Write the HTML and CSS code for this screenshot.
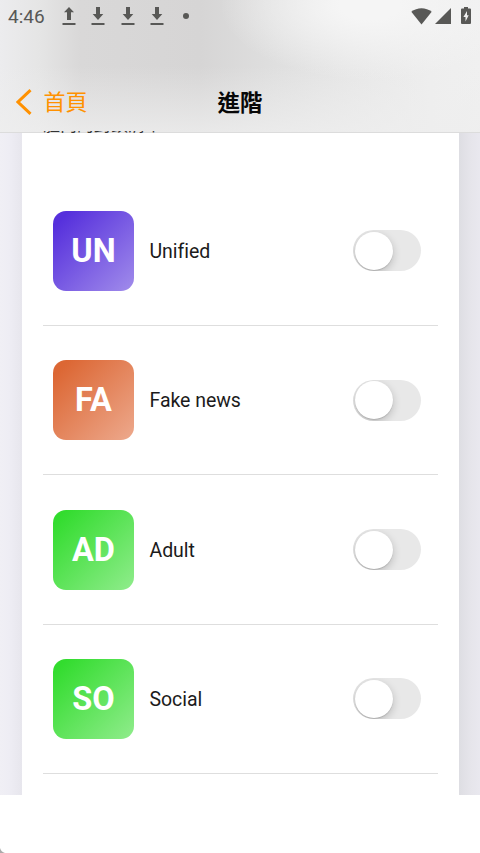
FILE: index.html
```html
<!DOCTYPE html>
<html lang="zh-Hant">
<head>
<meta charset="utf-8">
<title>進階</title>
<link rel="stylesheet" href="styles.css">
</head>
<body>
<div class="app">
  <header class="header">
    <div class="status">
      <span class="time">4:46</span>
      <div class="notices">
        <svg class="transfer" viewBox="0 0 14 19"><path d="M7 0 12 5.3H9V13H5V5.3H2zM.5 16h13v2H.5z"/></svg>
        <svg class="transfer" viewBox="0 0 14 19"><path d="M5 0h4v7h3.3L7 13 1.7 7H5zM.5 16h13v2H.5z"/></svg>
        <svg class="transfer" viewBox="0 0 14 19"><path d="M5 0h4v7h3.3L7 13 1.7 7H5zM.5 16h13v2H.5z"/></svg>
        <svg class="transfer" viewBox="0 0 14 19"><path d="M5 0h4v7h3.3L7 13 1.7 7H5zM.5 16h13v2H.5z"/></svg>
      </div>
      <span class="dot"></span>
      <svg class="wifi" viewBox="0 0 21 17"><path d="M10.5 16.5.3 3.8C6-1 15-1 20.7 3.8z"/></svg>
      <svg class="signal" viewBox="0 0 16 16"><path d="M16 0v16H0z"/></svg>
      <svg class="battery" viewBox="0 0 10 17"><path fill-rule="evenodd" d="M3 0h4v1.500h2q1 0 1 1v13.500q0 1-1 1H1q-1 0-1-1V2.500q0-1 1-1h2zM6 4 2.400 10H4.500V14.500L7.700 8.300H6z"/></svg>
    </div>
    <nav class="nav">
      <div class="back">
        <svg class="chevron" viewBox="0 0 16 26"><path d="M14.5 1.2 2 13l12.500 11.800"/></svg>
        <span>首頁</span>
      </div>
      <h1 class="title">進階</h1>
    </nav>
    <div class="peek"><span class="peek-text">體內的封鎖清單</span></div>
  </header>
  <main class="page">
    <section class="card">
      <div class="row"><div class="tile violet">UN</div><span class="label">Unified</span><span class="switch"><i class="knob"></i></span></div>
      <div class="row"><div class="tile orange">FA</div><span class="label">Fake news</span><span class="switch"><i class="knob"></i></span></div>
      <div class="row"><div class="tile green">AD</div><span class="label">Adult</span><span class="switch"><i class="knob"></i></span></div>
      <div class="row"><div class="tile green">SO</div><span class="label">Social</span><span class="switch"><i class="knob"></i></span></div>
    </section>
  </main>
  <footer class="footer">
    <svg class="corner" viewBox="0 0 5 5"><path d="M0 0Q1 4 5 5H0z"/></svg>
  </footer>
</div>
</body>
</html>
```
FILE: styles.css
```css
* { box-sizing: border-box; }
body { margin: 0; background: #fff; font-family: Roboto, "Noto Sans CJK TC", sans-serif; color: #1c1b1b; }
.app { display: flex; flex-direction: column; width: 480px; height: 853px; overflow: hidden; }
.header {
  display: flex;
  flex-direction: column;
  height: 133px;
  flex: none;
  border-bottom: 1px solid #dcdcdc;
  background:
    linear-gradient(to bottom, rgba(238,238,238,0) 50%, rgba(238,238,238,.8) 100%),
    radial-gradient(ellipse 150px 75px at 370px 5px, #f5f5f5 20%, rgba(245,245,245,0) 100%),
    linear-gradient(to right, #ececee 0, #e5e5e5 40px, #d9d8d8 80px, #d6d5d5 200px, #dfdfdf 275px, #e7e7e7 350px, #eee 430px, #f0f0f0 480px);
}
.status { display: flex; align-items: center; height: 32px; padding: 0 9px 0 8px; color: #585856; }
.status svg { fill: #585856; flex: none; }
.time { width: 54px; padding-top: 1px; font-size: 19px; line-height: 32px; }
.notices { display: flex; gap: 15.300px; }
.transfer { width: 14px; height: 19px; }
.dot { width: 6px; height: 6px; margin-left: 19px; border-radius: 50%; background: #585856; }
.wifi { width: 21px; height: 17px; margin-left: auto; }
.signal { width: 16px; height: 16px; margin-left: 3px; }
.battery { width: 10px; height: 17px; margin: -1px 0 0 10px; }
.nav { display: grid; grid-template-columns: 1fr auto 1fr; align-items: center; height: 60px; margin-top: 40px; padding: 1px 16px 0; flex: none; }
.back { display: flex; align-items: center; gap: 11.500px; color: #ff9100; font-size: 22px; line-height: 30px; }
.chevron { width: 16px; height: 26px; margin-top: -2px; fill: none; stroke: #ff9100; stroke-width: 3; }
.title { margin: 0; font-size: 22.500px; line-height: 30px; font-weight: 700; color: #080808; }
.peek { display: flex; align-items: flex-end; height: 2px; margin: -1px 0 0 43px; overflow: hidden; flex: none; color: #333; }
.peek-text { font-size: 17px; line-height: 20px; margin-bottom: -2px; white-space: nowrap; }
.page {
  height: 661.500px;
  flex: none;
  padding: 0 21.500px 0 22px;
  background: linear-gradient(to right, #f0eff5 0, #eeedf4 9px, #e7e6ed 22px, #e7e6ed 240px, #dddde2 458px, #e6e5eb 471px, #e9e8ef 480px);
}
.card { height: 100%; padding: 43.800px 21px 0; background: #fff; }
.row { display: flex; align-items: center; height: 149.330px; padding: 0 16.500px 0 10.200px; border-bottom: 1px solid #dedede; }
.tile { display: flex; align-items: center; justify-content: center; width: 80.500px; height: 80px; border-radius: 13px; color: #fff; font-size: 32.500px; font-weight: 700; flex: none; }
.violet { background: linear-gradient(135deg, #5630dc 10%, #a18ceb); }
.orange { background: linear-gradient(135deg, #dc6734 10%, #eda98d); }
.green { background: linear-gradient(135deg, #32dc2e 8%, #90ec8c); }
.label { margin: 1px 0 0 15.800px; flex: 1; font-size: 19.500px; letter-spacing: -.05px; }
.switch { display: flex; align-items: center; width: 68px; height: 41px; padding-left: 2px; border-radius: 21px; background: #e8e8e8; overflow: hidden; }
.knob { width: 38px; height: 38px; border-radius: 50%; background: #fff; box-shadow: 0 3px 8px rgba(0,0,0,.2), 0 1px 1px rgba(0,0,0,.12); }
.footer { display: flex; flex: 1; align-items: flex-end; background: #fff; }
.corner { display: block; width: 5px; height: 5px; fill: #aaa; }
```
